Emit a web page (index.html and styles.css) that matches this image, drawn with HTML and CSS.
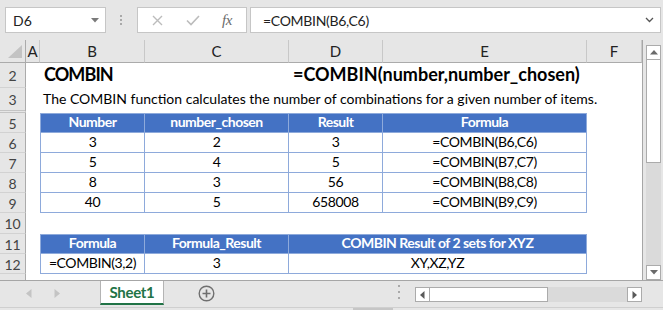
FILE: index.html
```html
<!DOCTYPE html>
<html>
<head>
<meta charset="utf-8">
<link rel="stylesheet" href="styles.css">
</head>
<body>
<div class="app">
  <div class="toolbar">
    <div class="namebox"><span class="nb-text">D6</span><svg class="caret" width="8" height="5" viewBox="0 0 8 5"><polygon points="0,0 8,0 4,4.5" fill="#7a7a7a"/></svg></div>
    <div class="tsep"><i></i><i></i><i></i></div>
    <div class="fxbox">
      <svg class="ic-x" width="11" height="11" viewBox="0 0 11 11"><path d="M1 1L10 10M10 1L1 10" stroke="#bcbcbc" stroke-width="1.4" fill="none"/></svg>
      <svg class="ic-check" width="14" height="11" viewBox="0 0 14 11"><path d="M1 5.5L5 9.5L13 1" stroke="#bcbcbc" stroke-width="1.6" fill="none"/></svg>
      <span class="fx">fx</span>
    </div>
    <div class="formula"><span class="f-text">=COMBIN(B6,C6)</span><svg class="chev" width="9" height="6" viewBox="0 0 9 6"><path d="M1 1L4.5 4.5L8 1" stroke="#555" stroke-width="1.3" fill="none"/></svg></div>
  </div>

  <div class="main">
    <div class="sheet">
      <div class="grid">
        <div class="corner"><svg width="15" height="14" viewBox="0 0 15 14"><polygon points="0,13 14,13 14,0" fill="#c3c3c3"/></svg></div>
        <div class="ch">A</div><div class="ch">B</div><div class="ch">C</div><div class="ch">D</div><div class="ch">E</div><div class="ch">F</div>

        <div class="rh">2</div>
        <div class="c"></div>
        <div class="c title t1 span2">COMBIN</div>
        <div class="c title span3">=COMBIN(number,number_chosen)</div>

        <div class="rh rh3">3</div>
        <div class="c"></div>
        <div class="c desc span5">The COMBIN function calculates the number of combinations for a given number of items.</div>

        <div class="rh">5</div>
        <div class="c"></div>
        <div class="c th first">Number</div>
        <div class="c th">number_chosen</div>
        <div class="c th">Result</div>
        <div class="c th">Formula</div>
        <div class="c"></div>

        <div class="rh">6</div>
        <div class="c"></div>
        <div class="c td first">3</div>
        <div class="c td">2</div>
        <div class="c td">3</div>
        <div class="c td">=COMBIN(B6,C6)</div>
        <div class="c"></div>

        <div class="rh">7</div>
        <div class="c"></div>
        <div class="c td first">5</div>
        <div class="c td">4</div>
        <div class="c td">5</div>
        <div class="c td">=COMBIN(B7,C7)</div>
        <div class="c"></div>

        <div class="rh">8</div>
        <div class="c"></div>
        <div class="c td first">8</div>
        <div class="c td">3</div>
        <div class="c td">56</div>
        <div class="c td">=COMBIN(B8,C8)</div>
        <div class="c"></div>

        <div class="rh">9</div>
        <div class="c"></div>
        <div class="c td first">40</div>
        <div class="c td">5</div>
        <div class="c td">658008</div>
        <div class="c td">=COMBIN(B9,C9)</div>
        <div class="c"></div>

        <div class="rh">10</div>
        <div class="c span6"></div>

        <div class="rh">11</div>
        <div class="c"></div>
        <div class="c th first">Formula</div>
        <div class="c th">Formula_Result</div>
        <div class="c th span2">COMBIN Result of 2 sets for XYZ</div>
        <div class="c"></div>

        <div class="rh">12</div>
        <div class="c"></div>
        <div class="c td first">=COMBIN(3,2)</div>
        <div class="c td">3</div>
        <div class="c td span2">XY,XZ,YZ</div>
        <div class="c"></div>

        <div class="rh rh13"></div>
        <div class="c span6"></div>
      </div>
    </div>
    <div class="vscroll">
      <div class="sbtn"><svg width="8" height="5" viewBox="0 0 8 5"><polygon points="0,4.5 8,4.5 4,0" fill="#6a6a6a"/></svg></div>
      <div class="vthumb"></div>
      <div class="vtrack"></div>
      <div class="sbtn"><svg width="8" height="5" viewBox="0 0 8 5"><polygon points="0,0 8,0 4,4.5" fill="#6a6a6a"/></svg></div>
    </div>
  </div>

  <div class="bottom">
    <div class="nav">
      <svg width="6" height="9" viewBox="0 0 6 9"><polygon points="5.5,0 5.5,9 0,4.5" fill="#c4c4c4"/></svg>
      <svg width="6" height="9" viewBox="0 0 6 9"><polygon points="0.5,0 0.5,9 6,4.5" fill="#c4c4c4"/></svg>
    </div>
    <div class="tab">Sheet1</div>
    <div class="add"><svg width="17" height="17" viewBox="0 0 17 17"><circle cx="8.5" cy="8.5" r="7.3" fill="none" stroke="#6f6f6f" stroke-width="1.4"/><path d="M8.5 4.5V12.5M4.5 8.5H12.5" stroke="#6f6f6f" stroke-width="1.6"/></svg></div>
    <div class="hdots"><i></i><i></i><i></i></div>
    <div class="hscroll">
      <div class="hbtn"><svg width="5" height="8" viewBox="0 0 5 8"><polygon points="4.5,0 4.5,8 0,4" fill="#5a5a5a"/></svg></div>
      <div class="hthumb"></div>
      <div class="htrack"></div>
      <div class="hbtn"><svg width="5" height="8" viewBox="0 0 5 8"><polygon points="0.5,0 0.5,8 5,4" fill="#5a5a5a"/></svg></div>
    </div>
  </div>
  <div class="status"><span class="seg"></span></div>
</div>
</body>
</html>
```

FILE: styles.css
```css
* { box-sizing: border-box; }
html, body { margin: 0; padding: 0; }
body {
  width: 663px;
  height: 310px;
  overflow: hidden;
  font-family: Lato, "Liberation Sans", sans-serif;
  background: #e6e6e6;
}
.app {
  width: 663px;
  height: 310px;
  display: flex;
  flex-direction: column;
  background: #e6e6e6;
}

/* ---------- toolbar ---------- */
.toolbar {
  height: 40px;
  display: flex;
  align-items: flex-start;
  padding: 7px 0 0 5px;
}
.namebox {
  width: 101px;
  height: 26px;
  background: #fff;
  border: 1px solid #c6c6c6;
  display: flex;
  align-items: center;
  padding-left: 7px;
  font-size: 14px;
  color: #222;
}
.nb-text { flex: 1; }
.caret { margin-right: 6px; }
.tsep {
  width: 31px;
  height: 26px;
  display: flex;
  flex-direction: column;
  align-items: center;
  justify-content: center;
  gap: 2px;
  padding-right: 1px;
}
.tsep i, .hdots i {
  display: block;
  width: 2px;
  height: 2px;
  background: #a9a9a9;
}
.fxbox {
  width: 110px;
  height: 26px;
  background: #fff;
  border: 1px solid #c6c6c6;
  display: flex;
  align-items: center;
  padding-left: 14px;
}
.ic-check { margin-left: 23px; }
.fx {
  margin-left: 22px;
  font-family: "Liberation Serif", serif;
  font-style: italic;
  font-size: 15px;
  color: #6a6a6a;
  letter-spacing: -0.5px;
}
.formula {
  margin-left: 3px;
  width: 411px;
  height: 26px;
  background: #fff;
  border: 1px solid #c6c6c6;
  display: flex;
  align-items: center;
  padding-left: 12px;
  font-size: 14px;
  letter-spacing: -0.3px;
  color: #222;
}
.f-text { flex: 1; }
.chev { margin-right: 6px; }

/* ---------- sheet ---------- */
.main {
  height: 240px;
  display: flex;
}
.sheet {
  width: 643px;
  border-right: 1px solid #a6a6a6;
  background: #fff;
  overflow: hidden;
}
.grid {
  display: grid;
  grid-template-columns: 26px 14px 105px 144px 94px 204px 55px;
  grid-template-rows: 23px 25px 25px 20px 20px 20px 20px 20px 21px 20px 20px 6px;
}
.corner, .ch {
  background: #e6e6e6;
  border-right: 1px solid #c8c8c8;
  border-bottom: 1px solid #ababab;
}
.corner {
  border-right: 1px solid #ababab;
  display: flex;
  align-items: flex-end;
  padding: 0 0 3px 8px;
}
.ch {
  display: flex;
  align-items: center;
  justify-content: center;
  font-size: 15px;
  color: #222;
}
.ch:last-of-type { border-right: none; }
.rh {
  background: #e6e6e6;
  border-right: 1px solid #ababab;
  border-bottom: 1px solid #d2d2d2;
  display: flex;
  align-items: center;
  justify-content: center;
  font-size: 14px;
  color: #444;
  padding-top: 1px;
}
.rh3 { border-bottom: 3px double #c4c4c4; }
.rh13 { border-bottom: none; }

.c {
  display: flex;
  align-items: flex-end;
  white-space: nowrap;
  font-size: 14px;
  line-height: 18px;
  color: #111;
  min-width: 0;
}
.span2 { grid-column: span 2; }
.span3 { grid-column: span 3; }
.span5 { grid-column: span 5; }
.span6 { grid-column: span 6; }

.title {
  font-weight: 700;
  font-size: 18px;
  line-height: 22px;
  padding: 0 0 3px 4px;
  color: #000;
}
.t1 { letter-spacing: -0.9px; }
.desc {
  padding: 0 0 5px 3px;
  color: #000;
}
.th, .td {
  justify-content: center;
  border-right: 1px solid #8eaadb;
  border-bottom: 1px solid #8eaadb;
  letter-spacing: -0.4px;
  padding-bottom: 1px;
}
.first { border-left: 1px solid #8eaadb; }
.th {
  background: #4472c4;
  color: #fff;
  font-weight: 700;
  border-top: 1px solid #8eaadb;
  letter-spacing: -0.5px;
}
.td { color: #000; }

/* ---------- vertical scrollbar ---------- */
.vscroll {
  width: 20px;
  display: flex;
  flex-direction: column;
  padding: 5px 2px 0 3px;
}
.sbtn {
  width: 15px;
  height: 15px;
  background: #fff;
  border: 1px solid #ababab;
  display: flex;
  align-items: center;
  justify-content: center;
}
.vthumb {
  width: 15px;
  height: 103px;
  background: #fff;
  border: 1px solid #ababab;
  border-top: none;
}
.vtrack {
  width: 15px;
  flex: 1;
  background: #dadada;
}

/* ---------- bottom bar ---------- */
.bottom {
  height: 27px;
  border-top: 1px solid #a6a6a6;
  display: flex;
  align-items: flex-start;
}
.nav {
  width: 100px;
  height: 24px;
  display: flex;
  align-items: center;
  padding-left: 26px;
  gap: 22px;
}
.tab {
  width: 64px;
  height: 24px;
  background: #fff;
  border-left: 1px solid #b4b4b4;
  border-right: 1px solid #b4b4b4;
  border-bottom: 2px solid #217346;
  display: flex;
  align-items: center;
  justify-content: center;
  font-weight: 700;
  font-size: 15px;
  color: #217346;
  letter-spacing: -0.3px;
}
.add {
  margin-left: 34px;
  height: 24px;
  display: flex;
  align-items: center;
}
.hdots {
  margin-left: 183px;
  padding-top: 4px;
  display: flex;
  flex-direction: column;
  gap: 4px;
}
.hscroll {
  margin-left: 15px;
  margin-top: 6px;
  width: 227px;
  height: 15px;
  display: flex;
}
.hbtn {
  width: 15px;
  height: 15px;
  background: #fff;
  border: 1px solid #ababab;
  display: flex;
  align-items: center;
  justify-content: center;
}
.hthumb {
  width: 118px;
  height: 15px;
  background: #fff;
  border: 1px solid #ababab;
  border-left: none;
}
.htrack {
  flex: 1;
  height: 15px;
  background: #dadada;
}
.status {
  height: 3px;
  border-top: 1px solid #cfcfcf;
  background: #e6e6e6;
}
.seg {
  display: block;
  margin-left: 353px;
  width: 40px;
  height: 2px;
  background: #c6c6c6;
}
```
